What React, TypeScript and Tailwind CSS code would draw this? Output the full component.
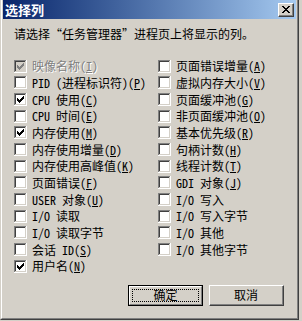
import React from "react";

const FONT = '"Noto Sans Mono CJK SC", "Noto Sans CJK SC", sans-serif';

const CHECK = [
  "......X",
  ".....XX",
  "X...XXX",
  "XX.XXX.",
  "XXXXX..",
  ".XXX...",
  "..X....",
];

const CLOSE = [
  "XX....XX",
  ".XX..XX.",
  "..XXXX..",
  "...XX...",
  "..XXXX..",
  ".XX..XX.",
  "XX....XX",
];

function Pixels({ rows, color, x, y }: { rows: string[]; color: string; x: number; y: number }) {
  const rects: React.ReactNode[] = [];
  rows.forEach((r, j) =>
    r.split("").forEach((c, i) => {
      if (c === "X") rects.push(<rect key={`${i}-${j}`} x={x + i} y={y + j} width={1} height={1} fill={color} />);
    })
  );
  return <>{rects}</>;
}

function CheckBox({ checked, disabled }: { checked?: boolean; disabled?: boolean }) {
  return (
    <svg width="13" height="13" viewBox="0 0 13 13" shapeRendering="crispEdges" className="shrink-0 block">
      <rect x="0" y="0" width="13" height="13" fill="#ffffff" />
      <rect x="0" y="0" width="12" height="12" fill="#808080" />
      <rect x="1" y="1" width="11" height="11" fill="#d4d0c8" />
      <rect x="1" y="1" width="10" height="10" fill="#404040" />
      <rect x="2" y="2" width="9" height="9" fill={disabled ? "#d4d0c8" : "#ffffff"} />
      {checked && <Pixels rows={CHECK} color={disabled ? "#808080" : "#000000"} x={3} y={3} />}
    </svg>
  );
}

type Item = { label: string; key?: string; checked?: boolean; disabled?: boolean };

const left: Item[] = [
  { label: "映像名称", key: "I", checked: true, disabled: true },
  { label: "PID (进程标识符)", key: "P" },
  { label: "CPU 使用", key: "C", checked: true },
  { label: "CPU 时间", key: "E" },
  { label: "内存使用", key: "M", checked: true },
  { label: "内存使用增量", key: "D" },
  { label: "内存使用高峰值", key: "K" },
  { label: "页面错误", key: "F" },
  { label: "USER 对象", key: "U" },
  { label: "I/O 读取" },
  { label: "I/O 读取字节" },
  { label: "会话 ID", key: "S" },
  { label: "用户名", key: "N", checked: true },
];

const right: Item[] = [
  { label: "页面错误增量", key: "A" },
  { label: "虚拟内存大小", key: "V" },
  { label: "页面缓冲池", key: "G" },
  { label: "非页面缓冲池", key: "O" },
  { label: "基本优先级", key: "R" },
  { label: "句柄计数", key: "H" },
  { label: "线程计数", key: "T" },
  { label: "GDI 对象", key: "J" },
  { label: "I/O 写入" },
  { label: "I/O 写入字节" },
  { label: "I/O 其他" },
  { label: "I/O 其他字节" },
];

function Row({ item }: { item: Item }) {
  return (
    <div className="h-[16.67px] flex items-center gap-[5px]">
      <CheckBox checked={item.checked} disabled={item.disabled} />
      <span
        className={`text-[12px] leading-[14px] whitespace-nowrap ${item.disabled ? "text-[#808080] [text-shadow:1px_1px_0_#ffffff]" : "text-black"}`}
      >
        {item.label}
        {item.key && (
          <>
            (<span className="underline underline-offset-[1px]">{item.key}</span>)
          </>
        )}
      </span>
    </div>
  );
}

export default function App() {
  return (
    <div className="w-[302px] h-[321px] bg-[#d4d0c8] overflow-hidden" style={{ fontFamily: FONT }}>
      <div className="w-[299px] h-[320px] border-l border-l-[#d4d0c8] border-r border-b border-r-[#404040] border-b-[#404040]">
        <div className="h-full border-l border-l-white border-r border-b border-r-[#808080] border-b-[#808080] px-px pb-px flex flex-col">
          <div className="h-[19px] shrink-0 flex items-center justify-between bg-gradient-to-r from-[#0a246a] to-[#a6caf0] pl-[2px] pr-[2px]">
            <span className="text-white font-bold text-[13px] leading-[15px]">选择列</span>
            <div className="w-[16px] h-[14px] border-t border-l border-t-white border-l-white border-r border-b border-r-[#404040] border-b-[#404040] bg-[#d4d0c8]">
              <div className="w-full h-full border-r border-b border-r-[#808080] border-b-[#808080] flex items-center justify-center">
                <svg width="8" height="7" viewBox="0 0 8 7" shapeRendering="crispEdges" className="block">
                  <Pixels rows={CLOSE} color="#000000" x={0} y={0} />
                </svg>
              </div>
            </div>
          </div>
          <div className="flex-1 flex flex-col">
            <p className="mt-[7px] ml-[11px] text-[12px] leading-[16px] text-black whitespace-nowrap">
              请选择“任务管理器”进程页上将显示的列。
            </p>
            <div className="flex mt-[16px] ml-[11px]">
              <div className="w-[144px] flex flex-col">
                {left.map((it) => (
                  <Row key={it.label} item={it} />
                ))}
              </div>
              <div className="flex flex-col">
                {right.map((it) => (
                  <Row key={it.label} item={it} />
                ))}
              </div>
            </div>
            <div className="flex justify-end gap-[6px] mr-[12px] mt-[10px]">
              <div className="w-[75px] h-[21px] border border-black bg-[#d4d0c8]">
                <div className="w-full h-full border-t border-l border-t-white border-l-white border-r border-b border-r-[#808080] border-b-[#808080] p-[2px]">
                  <div className="w-full h-full border border-dotted border-black flex items-center justify-center text-[12px] leading-[14px] text-black">
                    确定
                  </div>
                </div>
              </div>
              <div className="w-[75px] h-[21px] border-t border-l border-t-white border-l-white border-r border-b border-r-[#404040] border-b-[#404040] bg-[#d4d0c8]">
                <div className="w-full h-full border-r border-b border-r-[#808080] border-b-[#808080] flex items-center justify-center text-[12px] leading-[14px] text-black">
                  取消
                </div>
              </div>
            </div>
          </div>
        </div>
      </div>
    </div>
  );
}
